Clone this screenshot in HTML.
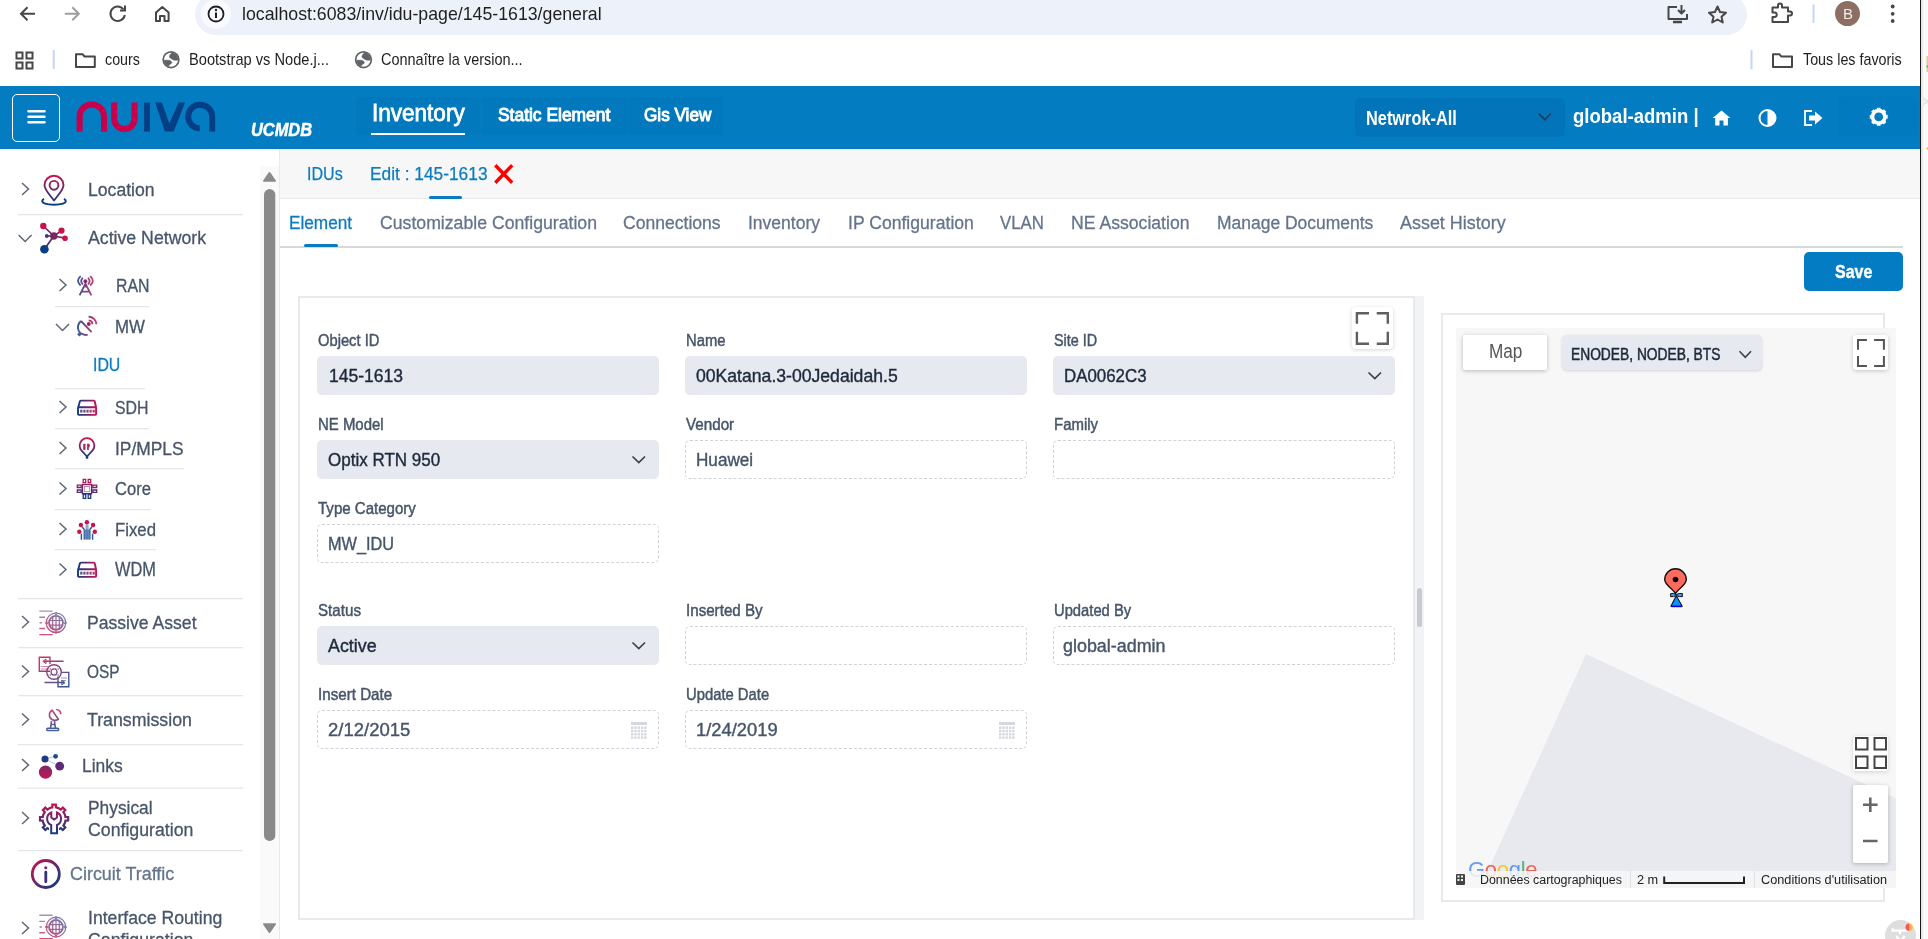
<!DOCTYPE html>
<html><head><meta charset="utf-8"><style>
html,body{margin:0;padding:0;}
body{width:1928px;height:939px;overflow:hidden;position:relative;background:#fff;font-family:"Liberation Sans",sans-serif;}
.t{position:absolute;white-space:nowrap;transform-origin:0 0;}
.r{position:absolute;}
svg{overflow:visible;}
</style></head><body>
<div class="r" style="left:195px;top:-6px;width:1552px;height:41px;background:#edf2fa;border-radius:21px;"></div>
<div class="r" style="left:201px;top:-1px;width:30px;height:30px;background:#f8faff;border-radius:50%;"></div>
<svg class="r" style="left:0;top:0" width="260" height="86" viewBox="0 0 260 86">
<g fill="none" stroke="#474747" stroke-width="2">
<path d="M35 13.7H21.5M27.5 7.2L21 13.7L27.5 20.2"/>
<path d="M64.8 13.7H78.3M72.3 7.2L78.8 13.7L72.3 20.2" stroke="#9e9e9e"/>
<path d="M123.5 9.5A7.2 7.2 0 1 0 124.8 15"/><path d="M125 5.5V10.5H120" />
<path d="M156 21V12.5L162.3 7L168.6 12.5V21H164.5V16H160V21Z" stroke-linejoin="round"/>
<rect x="16.5" y="52.5" width="6" height="6"/><rect x="26.5" y="52.5" width="6" height="6"/>
<rect x="16.5" y="62.5" width="6" height="6"/><rect x="26.5" y="62.5" width="6" height="6"/>
<path d="M76 54.2H82.5L84.5 56.5H94.8V67H76Z" stroke-linejoin="round"/>
</g>
<path d="M53.7 50V69" stroke="#c5d6f5" stroke-width="2"/>
<circle cx="216" cy="14" r="7.5" fill="none" stroke="#1f1f1f" stroke-width="1.8"/>
<rect x="215" y="12.5" width="2" height="5.5" fill="#1f1f1f"/><circle cx="216" cy="10" r="1.2" fill="#1f1f1f"/>
<g transform="translate(0.0,0)"><circle cx="171" cy="59.7" r="8.7" fill="#5f6368"/><circle cx="171" cy="59.7" r="7" fill="#fff"/><path d="M171.9 52.8A7 7 0 0 1 178 60.1L175.7 60.3L173.5 60L171 58.6L169.4 57.2L169.9 55Z" fill="#5f6368" stroke="#5f6368" stroke-width="0.6" stroke-linejoin="round"/><path d="M164.05 60.2L169.1 60.2L171 61.1L171.9 62.5L171 63.9L169.1 64.7L168.8 66.3A7 7 0 0 1 164.05 60.2Z" fill="#5f6368" stroke="#5f6368" stroke-width="0.6" stroke-linejoin="round"/></g>
</svg>
<svg class="r" style="left:355px;top:40px" width="20" height="40" viewBox="355 40 20 40"><g transform="translate(192.5,0)"><circle cx="171" cy="59.7" r="8.7" fill="#5f6368"/><circle cx="171" cy="59.7" r="7" fill="#fff"/><path d="M171.9 52.8A7 7 0 0 1 178 60.1L175.7 60.3L173.5 60L171 58.6L169.4 57.2L169.9 55Z" fill="#5f6368" stroke="#5f6368" stroke-width="0.6" stroke-linejoin="round"/><path d="M164.05 60.2L169.1 60.2L171 61.1L171.9 62.5L171 63.9L169.1 64.7L168.8 66.3A7 7 0 0 1 164.05 60.2Z" fill="#5f6368" stroke="#5f6368" stroke-width="0.6" stroke-linejoin="round"/></g></svg>
<svg class="r" style="left:1660px;top:0" width="268" height="86" viewBox="1660 0 268 86">
<g fill="none" stroke="#474747" stroke-width="2" stroke-linejoin="round">
<path d="M1677 7H1668.5V19H1687V14"/><path d="M1681.5 5V13.5M1678 10L1681.5 13.5L1685 10"/><path d="M1673 22H1682" stroke-width="2.5"/>
<path d="M1717.5 6.5L1720 12L1726 12.7L1721.5 16.7L1722.8 22.5L1717.5 19.5L1712.2 22.5L1713.5 16.7L1709 12.7L1715 12Z"/>
<path d="M1772.5 7.5H1778V5.5A2 2 0 0 1 1782 5.5V7.5H1788V11.5H1790A2 2 0 0 1 1790 15.5H1788V22H1772.5V17H1775A2.3 2.3 0 0 0 1775 12.5H1772.5Z"/>
<path d="M1773 54.3H1779.5L1781.5 56.6H1792V67H1773Z"/>
</g>
<path d="M1813.5 4.5V23" stroke="#c5d6f5" stroke-width="2"/>
<path d="M1751.5 50V69.5" stroke="#c5d6f5" stroke-width="2"/>
<circle cx="1847.5" cy="13.6" r="12.5" fill="#8d6e63"/>
<circle cx="1892.7" cy="6.5" r="1.9" fill="#474747"/><circle cx="1892.7" cy="13.8" r="1.9" fill="#474747"/><circle cx="1892.7" cy="21" r="1.9" fill="#474747"/>
</svg>
<div class="t" style="left:242.00px;top:5.00px;font-size:18.31px;line-height:18.31px;color:#1f1f1f;font-weight:normal;font-style:normal;transform:scaleX(0.9686);">localhost:6083/inv/idu-page/145-1613/general</div>
<div class="t" style="left:105.10px;top:52.00px;font-size:15.99px;line-height:15.99px;color:#1f1f1f;font-weight:normal;font-style:normal;transform:scaleX(0.8928);">cours</div>
<div class="t" style="left:189.00px;top:52.00px;font-size:15.99px;line-height:15.99px;color:#1f1f1f;font-weight:normal;font-style:normal;transform:scaleX(0.9159);">Bootstrap vs Node.j...</div>
<div class="t" style="left:381.30px;top:52.00px;font-size:15.99px;line-height:15.99px;color:#1f1f1f;font-weight:normal;font-style:normal;transform:scaleX(0.9057);">Connaître la version...</div>
<div class="t" style="left:1803.40px;top:52.00px;font-size:15.99px;line-height:15.99px;color:#1f1f1f;font-weight:normal;font-style:normal;transform:scaleX(0.8951);">Tous les favoris</div>
<div class="t" style="left:1842.50px;top:7.00px;font-size:14.53px;line-height:14.53px;color:#f3ebe8;font-weight:normal;font-style:normal;transform:scaleX(1.0346);">B</div>
<div class="r" style="left:1920px;top:0px;width:1px;height:939px;background:#1a1a1a;"></div>
<div class="r" style="left:1921px;top:0px;width:7px;height:939px;background:#efefef;"></div>
<div class="r" style="left:0px;top:86px;width:1920px;height:63px;background:#037cc2;"></div>
<div class="r" style="left:12px;top:94px;width:48px;height:48px;border:1px solid #fff;border-radius:5px;box-sizing:border-box;"></div>
<svg class="r" style="left:0;top:86px" width="60" height="60" viewBox="0 86 60 60"><g stroke="#fff" stroke-width="2.6" stroke-linecap="round"><path d="M28.5 111.3H44.5M28.5 116.8H44.5M28.5 122.3H44.5"/></g></svg>
<svg class="r" style="left:0;top:86px" width="230" height="63" viewBox="0 86 230 63">
<g fill="none" stroke-width="6">
<path d="M79.6 131.8V116.6A12.2 12.2 0 0 1 104 116.6V131.8" stroke="#c8004b"/>
<path d="M114.2 102.4V118.85A10.15 10.15 0 0 0 134.5 118.85V102.4" stroke="#c8004b"/>
<path d="M199.7 128.3A11.5 11.8 0 0 1 188.2 116.5A11.5 11.8 0 0 1 199.7 104.7C206.6 104.7 212.2 109.6 212.2 116.6V131.6" stroke="#043f86" stroke-width="5.9"/>
</g>
<rect x="144.1" y="102.6" width="5.9" height="29" fill="#043f86"/>
<path d="M155.2 102.4H161.8L169.3 123.5L178.6 102.4H185L173.7 131.6H164.9Z" fill="#043f86"/>
</svg>
<div class="t" style="left:250.70px;top:121.00px;font-size:18.60px;line-height:18.60px;color:#fff;font-weight:bold;font-style:italic;transform:scaleX(0.8814);-webkit-text-stroke:0.5px #fff;">UCMDB</div>
<div class="r" style="left:356px;top:97px;width:124px;height:38px;background:rgba(0,0,0,0.025);border-radius:4px;"></div>
<div class="r" style="left:482px;top:97px;width:145px;height:38px;background:rgba(0,0,0,0.025);border-radius:4px;"></div>
<div class="r" style="left:628px;top:97px;width:95px;height:38px;background:rgba(0,0,0,0.025);border-radius:4px;"></div>
<div class="t" style="left:372.00px;top:102.00px;font-size:23.69px;line-height:23.69px;color:#fff;font-weight:normal;font-style:normal;transform:scaleX(0.9508);-webkit-text-stroke:0.8px #fff;">Inventory</div>
<div class="r" style="left:371px;top:133px;width:94px;height:2px;background:#fff;"></div>
<div class="t" style="left:498.40px;top:106.00px;font-size:18.90px;line-height:18.90px;color:#fff;font-weight:normal;font-style:normal;transform:scaleX(0.9222);-webkit-text-stroke:1.0px #fff;">Static Element</div>
<div class="t" style="left:644.40px;top:106.00px;font-size:18.90px;line-height:18.90px;color:#fff;font-weight:normal;font-style:normal;transform:scaleX(0.9076);-webkit-text-stroke:1.0px #fff;">Gis View</div>
<div class="r" style="left:1355px;top:98px;width:210px;height:38.5px;background:#0275ba;border-radius:5px;"></div>
<div class="t" style="left:1366.00px;top:108.00px;font-size:20.35px;line-height:20.35px;color:#fff;font-weight:bold;font-style:normal;transform:scaleX(0.8033);">Netwrok-All</div>
<svg class="r" style="left:1530px;top:105px" width="30" height="25" viewBox="1530 105 30 25"><path d="M1538.8 113.6L1544.8 119.6L1550.8 113.6" fill="none" stroke="#183f63" stroke-width="1.8"/></svg>
<div class="t" style="left:1572.70px;top:106.00px;font-size:20.35px;line-height:20.35px;color:#fff;font-weight:bold;font-style:normal;transform:scaleX(0.9104);">global-admin |</div>
<div class="r" style="left:1838px;top:97px;width:81px;height:39px;background:rgba(0,0,0,0.012);border-radius:4px;"></div>
<svg class="r" style="left:1700px;top:100px" width="200" height="35" viewBox="1700 100 200 35">
<path d="M1721.5 110.4L1712.7 118H1715.2V125.6H1719.5V120.5H1723.5V125.6H1727.9V118H1730.4Z" fill="#fff"/>
<circle cx="1767.5" cy="118" r="8" fill="none" stroke="#fff" stroke-width="2"/><path d="M1767.5 110A8 8 0 0 1 1767.5 126Z" fill="#fff"/>
<path d="M1812 111H1805V125H1812" fill="none" stroke="#fff" stroke-width="1.8"/><path d="M1809 115.5H1815V111.5L1822.5 118L1815 124.5V120.5H1809Z" fill="#fff"/>
<g transform="translate(1878.7,116.8)"><circle r="6.2" fill="none" stroke="#fff" stroke-width="3.6"/>
<g fill="#fff"><rect x="-1.8" y="-9" width="3.6" height="4"/><rect x="-1.8" y="5" width="3.6" height="4"/><rect x="-9" y="-1.8" width="4" height="3.6"/><rect x="5" y="-1.8" width="4" height="3.6"/>
<g transform="rotate(45)"><rect x="-1.8" y="-9" width="3.6" height="4"/><rect x="-1.8" y="5" width="3.6" height="4"/><rect x="-9" y="-1.8" width="4" height="3.6"/><rect x="5" y="-1.8" width="4" height="3.6"/></g></g></g>
</svg>
<div class="r" style="left:0px;top:149px;width:279px;height:790px;background:#fff;"></div>
<div class="r" style="left:279px;top:149px;width:1px;height:790px;background:#e6e9ee;"></div>
<div class="r" style="left:260px;top:166px;width:19px;height:773px;background:#fafafa;"></div>
<svg class="r" style="left:255px;top:160px" width="25" height="779" viewBox="255 160 25 779">
<path d="M263.8 181L269.5 172.8L275.2 181Z" fill="#8a8a8a" stroke="#8a8a8a" stroke-width="1.6" stroke-linejoin="round"/>
<rect x="264" y="189" width="11.3" height="652" rx="5.6" fill="#8a8a8a"/>
<path d="M263.8 924L269.5 932.2L275.2 924Z" fill="#8a8a8a" stroke="#8a8a8a" stroke-width="1.6" stroke-linejoin="round"/>
</svg>
<svg class="r" style="left:0;top:0" width="260" height="939" viewBox="0 0 260 939"><path d="M22 183L28.5 189L22 195" fill="none" stroke="#5d6878" stroke-width="1.5"/><path d="M18.6 235.0L25.1 241.5L31.6 235.0" fill="none" stroke="#5d6878" stroke-width="1.5"/><path d="M59.5 279L66.0 285L59.5 291" fill="none" stroke="#5d6878" stroke-width="1.5"/><path d="M59.5 401L66.0 407L59.5 413" fill="none" stroke="#5d6878" stroke-width="1.5"/><path d="M59.5 442L66.0 448L59.5 454" fill="none" stroke="#5d6878" stroke-width="1.5"/><path d="M59.5 482.5L66.0 488.5L59.5 494.5" fill="none" stroke="#5d6878" stroke-width="1.5"/><path d="M59.5 523L66.0 529L59.5 535" fill="none" stroke="#5d6878" stroke-width="1.5"/><path d="M59.5 563.5L66.0 569.5L59.5 575.5" fill="none" stroke="#5d6878" stroke-width="1.5"/><path d="M56 324.0L62.5 330.5L69 324.0" fill="none" stroke="#5d6878" stroke-width="1.5"/><path d="M22 616L28.5 622L22 628" fill="none" stroke="#5d6878" stroke-width="1.5"/><path d="M22 665.5L28.5 671.5L22 677.5" fill="none" stroke="#5d6878" stroke-width="1.5"/><path d="M22 713.5L28.5 719.5L22 725.5" fill="none" stroke="#5d6878" stroke-width="1.5"/><path d="M22 759L28.5 765L22 771" fill="none" stroke="#5d6878" stroke-width="1.5"/><path d="M22 812L28.5 818L22 824" fill="none" stroke="#5d6878" stroke-width="1.5"/><path d="M22 922L28.5 928L22 934" fill="none" stroke="#5d6878" stroke-width="1.5"/><rect x="18" y="214" width="225" height="1.3" fill="#e3e7ec"/><rect x="55" y="306" width="94" height="1.3" fill="#e3e7ec"/><rect x="55" y="388" width="90" height="1.3" fill="#e3e7ec"/><rect x="55" y="428" width="94" height="1.3" fill="#e3e7ec"/><rect x="55" y="468" width="129" height="1.3" fill="#e3e7ec"/><rect x="55" y="509" width="96" height="1.3" fill="#e3e7ec"/><rect x="55" y="549" width="101" height="1.3" fill="#e3e7ec"/><rect x="18" y="598" width="225" height="1.3" fill="#e3e7ec"/><rect x="18" y="647" width="225" height="1.3" fill="#e3e7ec"/><rect x="18" y="695" width="225" height="1.3" fill="#e3e7ec"/><rect x="18" y="744" width="225" height="1.3" fill="#e3e7ec"/><rect x="18" y="787.5" width="225" height="1.3" fill="#e3e7ec"/><rect x="18" y="850" width="225" height="1.3" fill="#e3e7ec"/></svg>
<svg class="r" style="left:0;top:0" width="260" height="939" viewBox="0 0 260 939"><defs><linearGradient id="g1" gradientUnits="userSpaceOnUse" x1="0" y1="175" x2="0" y2="205"><stop offset="0" stop-color="#c8124e"/><stop offset="1" stop-color="#0a3d84"/></linearGradient><linearGradient id="g2" gradientUnits="userSpaceOnUse" x1="66" y1="222" x2="42" y2="252"><stop offset="0" stop-color="#c8124e"/><stop offset="1" stop-color="#0a3d84"/></linearGradient><linearGradient id="g3" gradientUnits="userSpaceOnUse" x1="77" y1="0" x2="95" y2="0"><stop offset="0" stop-color="#0a3d84"/><stop offset="1" stop-color="#c8124e"/></linearGradient><linearGradient id="g4" gradientUnits="userSpaceOnUse" x1="77" y1="0" x2="97" y2="0"><stop offset="0" stop-color="#0a3d84"/><stop offset="1" stop-color="#c8124e"/></linearGradient><linearGradient id="g5" gradientUnits="userSpaceOnUse" x1="77" y1="0" x2="97" y2="0"><stop offset="0" stop-color="#0a3d84"/><stop offset="1" stop-color="#c8124e"/></linearGradient><linearGradient id="g6" gradientUnits="userSpaceOnUse" x1="77" y1="0" x2="97" y2="0"><stop offset="0" stop-color="#0a3d84"/><stop offset="1" stop-color="#c8124e"/></linearGradient><linearGradient id="g7" gradientUnits="userSpaceOnUse" x1="0" y1="439" x2="0" y2="459"><stop offset="0" stop-color="#c8124e"/><stop offset="1" stop-color="#0a3d84"/></linearGradient><linearGradient id="g8" gradientUnits="userSpaceOnUse" x1="0" y1="479" x2="0" y2="499"><stop offset="0" stop-color="#c8124e"/><stop offset="1" stop-color="#0a3d84"/></linearGradient><linearGradient id="g9" gradientUnits="userSpaceOnUse" x1="66" y1="610.8" x2="44" y2="634.8"><stop offset="0" stop-color="#3d6aa8"/><stop offset="1" stop-color="#c8124e"/></linearGradient><linearGradient id="g10" gradientUnits="userSpaceOnUse" x1="0" y1="610.8" x2="0" y2="634.8"><stop offset="0" stop-color="#8a6aa8"/><stop offset="1" stop-color="#c8124e"/></linearGradient><linearGradient id="g11" gradientUnits="userSpaceOnUse" x1="66" y1="915" x2="44" y2="939"><stop offset="0" stop-color="#3d6aa8"/><stop offset="1" stop-color="#c8124e"/></linearGradient><linearGradient id="g12" gradientUnits="userSpaceOnUse" x1="0" y1="915" x2="0" y2="939"><stop offset="0" stop-color="#8a6aa8"/><stop offset="1" stop-color="#c8124e"/></linearGradient><linearGradient id="g13" gradientUnits="userSpaceOnUse" x1="40" y1="657" x2="68" y2="687"><stop offset="0" stop-color="#c8124e"/><stop offset="1" stop-color="#0a3d84"/></linearGradient><linearGradient id="g14" gradientUnits="userSpaceOnUse" x1="0" y1="708" x2="0" y2="731"><stop offset="0" stop-color="#c8124e"/><stop offset="1" stop-color="#0a3d84"/></linearGradient><linearGradient id="g15" gradientUnits="userSpaceOnUse" x1="0" y1="765" x2="0" y2="779"><stop offset="0" stop-color="#7a2a6a"/><stop offset="1" stop-color="#c8124e"/></linearGradient><linearGradient id="g16" gradientUnits="userSpaceOnUse" x1="0" y1="804" x2="0" y2="834"><stop offset="0" stop-color="#c8124e"/><stop offset="1" stop-color="#0a3d84"/></linearGradient><linearGradient id="g17" gradientUnits="userSpaceOnUse" x1="33" y1="861" x2="59" y2="887"><stop offset="0" stop-color="#c8124e"/><stop offset="1" stop-color="#0a3d84"/></linearGradient></defs><g fill="none" stroke="url(#g1)" stroke-width="1.9"><path d="M54 200.5C49 194 44.5 189.5 44.5 185.2A9.5 9.5 0 0 1 63.5 185.2C63.5 189.5 59 194 54 200.5Z" stroke-linejoin="round"/><circle cx="54" cy="185.3" r="4.4"/><path d="M44 198.8C41.3 200.3 41.6 202.6 45 203.6C49.5 205 58.5 205 63 203.6C66.4 202.6 66.7 200.3 64 198.8" stroke="#0a3d84" stroke-width="2"/></g><g stroke="url(#g2)" stroke-width="1.7" fill="none"><path d="M43.3 226L53.8 236L61.5 230.7M53.8 236L65 238.2M46.8 236H53.8M53.8 236L44.4 249.2"/></g><circle cx="43.3" cy="226" r="3.2" fill="#c8124e"/><circle cx="61.5" cy="230.6" r="3.1" fill="#c8124e"/><circle cx="65" cy="238.3" r="2.8" fill="#c8124e"/><circle cx="53.8" cy="236" r="3.7" fill="#7a2560"/><circle cx="46.8" cy="236" r="1.9" fill="#3b3a7a"/><circle cx="44.4" cy="249.2" r="4.3" fill="#0a3d84"/><g fill="none" stroke="url(#g3)" stroke-width="1.8" stroke-linecap="round" opacity="0.85"><path d="M80.2 276.6Q75.8 280.8 80.2 285M82.4 278.3Q80 281 82.4 283.8M88.4 278.3Q90.8 281 88.4 283.8M90.6 276.6Q95 280.8 90.6 285"/><path d="M79.6 295.3L85.4 283.5L91.4 295.3M84 286.6H86.8M81.6 291.6H89.3" stroke-linecap="butt"/></g><circle cx="85.4" cy="281.2" r="1.9" fill="#7a2a66"/><g fill="none" stroke="url(#g4)" stroke-width="1.9" opacity="0.85"><path d="M81 321L91.6 332.2M81 321C76.5 325 77 332 82.5 334.2C84.3 335 86.5 335 87.7 334.6"/><path d="M88.6 320.4A4 4 0 0 1 92.4 324.3M88.6 316.7A7.7 7.7 0 0 1 96.3 324.3"/><path d="M78 333.5L80.5 335.5" stroke-width="2.8"/></g><circle cx="88.8" cy="324" r="1.9" fill="#b01a55"/><g fill="none" stroke="url(#g5)" stroke-width="1.9" stroke-linejoin="round"><path d="M78.3 407.3L79.9 401.3Q80.3 400.6 81.3 400.6H93.5Q94.3 400.6 94.7 401.3L96 407.3" transform="translate(0 0.0)"/><rect x="78" y="407.3" width="18.1" height="7.6" rx="0.8"/></g><g fill="url(#g5)" opacity="0.85"><rect x="80.2" y="409.7" width="2.2" height="2.9"/><rect x="83.3" y="409.7" width="2.2" height="2.9"/><rect x="86.4" y="409.7" width="2.2" height="2.9"/><rect x="89.5" y="409.7" width="2.2" height="2.9"/><rect x="92.6" y="409.7" width="2.2" height="2.9"/></g><g fill="none" stroke="url(#g6)" stroke-width="1.9" stroke-linejoin="round"><path d="M78.3 407.3L79.9 401.3Q80.3 400.6 81.3 400.6H93.5Q94.3 400.6 94.7 401.3L96 407.3" transform="translate(0 162.0)"/><rect x="78" y="569.3" width="18.1" height="7.6" rx="0.8"/></g><g fill="url(#g6)" opacity="0.85"><rect x="80.2" y="571.7" width="2.2" height="2.9"/><rect x="83.3" y="571.7" width="2.2" height="2.9"/><rect x="86.4" y="571.7" width="2.2" height="2.9"/><rect x="89.5" y="571.7" width="2.2" height="2.9"/><rect x="92.6" y="571.7" width="2.2" height="2.9"/></g><g fill="none" stroke="url(#g7)" stroke-width="1.8"><path d="M87 456.5L81.8 450.8A7.4 7.4 0 1 1 92.2 450.8Z" stroke-linejoin="round"/></g><path d="M87 456V458.7" stroke="#0a3d84" stroke-width="2.4"/><rect x="83.2" y="443.8" width="2.3" height="6.1" fill="#b0265e"/><path d="M87.1 443.8H89.3A3 3 0 0 1 89.3 447.4H88.8V449.9H87.1Z" fill="#b0265e"/><g fill="none" stroke="url(#g8)" stroke-width="1.4"><rect x="82.4" y="484.5" width="9.2" height="9.2"/><rect x="84.4" y="486.5" width="5.2" height="5.2" stroke-width="1" opacity="0.5"/><path d="M83.2 479.3H85.7V482.6H83.2ZM88.2 479.3H90.7V482.6H88.2ZM83.2 494.6H85.7V498.4H83.2ZM88.2 494.6H90.7V498.4H88.2ZM77.3 485.1H81.2V487.5H77.3ZM77.3 490H81.2V492.4H77.3ZM92.8 485.1H96.7V487.5H92.8ZM92.8 490H96.7V492.4H92.8Z" stroke-width="1.3"/></g><circle cx="87" cy="489.1" r="1.2" fill="#fff"/><g fill="none" stroke="#2f5c9c" stroke-width="1.5" stroke-linecap="round"><path d="M81.4 539.3V534.3M92.6 539.3V534.3M82.4 527.3L84.4 529.8"/><path d="M91.6 527.3L89.6 529.8"/></g><rect x="83.3" y="529.5" width="7.5" height="10" fill="#7b9ac4"/><path d="M84.5 539.5V530M86.2 539.5V524.5M87.9 539.5V524.5M89.6 539.5V530" stroke="#3d69a6" stroke-width="0.9"/><g fill="#c8124e"><circle cx="86.9" cy="522.3" r="2.2"/><circle cx="80.9" cy="525" r="2.2"/><circle cx="93.1" cy="525" r="2.2"/><circle cx="79.3" cy="531.7" r="2.2"/><circle cx="94.8" cy="531.7" r="2.2"/></g><g fill="none" stroke="url(#g9)" stroke-width="1.2" opacity="0.8"><circle cx="56" cy="622.8" r="9.8"/><circle cx="56" cy="622.8" r="7" stroke-width="1.8"/><path d="M56 615.8V629.8M49 620.5H63M49 625.0999999999999H63M52.7 616.8V628.8M59.3 616.8V628.8" stroke-width="1.2"/><path d="M56 612.3L57.6 613.5L56 614.8L54.4 613.5Z M56 630.8L57.6 632.0999999999999L56 633.3L54.4 632.0999999999999Z M45.5 622.8L46.7 621.1999999999999L48 622.8L46.7 624.4Z M64 622.8L65.3 621.1999999999999L66.5 622.8L65.3 624.4Z" stroke-width="1"/></g><g fill="none" stroke="url(#g10)" stroke-width="1.4" opacity="0.75"><path d="M39.3 611.0999999999999H52.7M39.3 617.1999999999999H45M39.6 622.8H41.8M39.3 628.5H45M39.3 634.5999999999999H52.7"/></g><g fill="none" stroke="url(#g11)" stroke-width="1.2" opacity="0.8"><circle cx="56" cy="927" r="9.8"/><circle cx="56" cy="927" r="7" stroke-width="1.8"/><path d="M56 920V934M49 924.7H63M49 929.3H63M52.7 921V933M59.3 921V933" stroke-width="1.2"/><path d="M56 916.5L57.6 917.7L56 919L54.4 917.7Z M56 935L57.6 936.3L56 937.5L54.4 936.3Z M45.5 927L46.7 925.4L48 927L46.7 928.6Z M64 927L65.3 925.4L66.5 927L65.3 928.6Z" stroke-width="1"/></g><g fill="none" stroke="url(#g12)" stroke-width="1.4" opacity="0.75"><path d="M39.3 915.3H52.7M39.3 921.4H45M39.6 927H41.8M39.3 932.7H45M39.3 938.8H52.7"/></g><g fill="none" stroke="url(#g13)" stroke-width="1.4" opacity="0.85"><path d="M50 671.3H39.3V657.3H50V664"/><path d="M58 676.5V686.8H68.8V672.4H61.5"/><circle cx="54" cy="672" r="7.3"/><circle cx="54" cy="672" r="3" stroke-width="1.2"/><path d="M47 669H61M47 675H61" stroke-width="1.1" stroke-dasharray="1.6 1"/><path d="M43.5 661.3H63.5M44.5 682.6H64.5" stroke-width="1.5"/><path d="M42.8 661.3L46 659V663.6Z M65 682.6L61.8 680.3V684.9Z" stroke-width="1"/><path d="M40.8 666.5H48M40.8 669H47" stroke-width="1" opacity="0.6"/><path d="M61 678H67M61 680.5H66" stroke-width="1" opacity="0.6"/></g><g fill="none" stroke="url(#g14)" stroke-width="1.6" stroke-linejoin="round" opacity="0.8"><path d="M52.1 710.2C48.5 712.5 48.6 717.5 52 719.5C54 720.6 56.5 720.3 58.4 719.2Z"/><path d="M56.2 709.5A4.6 4.6 0 0 1 60.8 714.3" /><path d="M50.6 728.2L51.5 721M55.4 728.2L54.5 721M51.2 724.5H54.8"/><rect x="46.8" y="728.3" width="11.8" height="2.3" rx="0.8" stroke-width="1.5"/></g><path d="M45 759L55.6 756.3M45 759L59.7 766.2" stroke="#b7bdd6" stroke-width="1"/><circle cx="45" cy="759" r="3.5" fill="#1f3a86"/><circle cx="55.6" cy="756.3" r="2.4" fill="#1d4a8c"/><circle cx="59.7" cy="766.2" r="4.4" fill="#5d2a78"/><circle cx="45.5" cy="772.2" r="6.6" fill="url(#g15)"/><mask id="pcm"><rect x="30" y="795" width="50" height="45" fill="#fff"/><rect x="49" y="822" width="10" height="14" fill="#000"/></mask><g fill="none" stroke="url(#g16)" stroke-width="2.2" stroke-linejoin="miter"><path d="M50.45 807.89 L52.30 807.44 L52.37 804.71 L55.83 804.71 L55.90 807.44 L57.75 807.89 L59.23 808.51 L60.86 809.50 L62.84 807.61 L65.29 810.06 L63.40 812.04 L64.39 813.67 L65.01 815.15 L65.46 817.00 L68.19 817.07 L68.19 820.53 L65.46 820.60 L65.01 822.45 L64.39 823.93 L63.40 825.56 L65.29 827.54 L62.84 829.99 L60.86 828.10 L59.23 829.09 L57.75 829.71 L55.90 830.16 L55.83 832.89 L52.37 832.89 L52.30 830.16 L50.45 829.71 L48.97 829.09 L47.34 828.10 L45.36 829.99 L42.91 827.54 L44.80 825.56 L43.81 823.93 L43.19 822.45 L42.74 820.60 L40.01 820.53 L40.01 817.07 L42.74 817.00 L43.19 815.15 L43.81 813.67 L44.80 812.04 L42.91 810.06 L45.36 807.61 L47.34 809.50 L48.97 808.51Z" mask="url(#pcm)"/><path d="M51.3 812.5A6.8 6.8 0 0 0 51.2 825V833.2H57V825A6.8 6.8 0 0 0 56.9 812.5V817.5L54.1 819.5L51.3 817.5Z" stroke-width="2"/></g><circle cx="45.8" cy="874" r="13.5" fill="none" stroke="url(#g17)" stroke-width="2.8"/><path d="M45.8 872.2V881.8" stroke="#3b2f7c" stroke-width="2.8" stroke-linecap="round"/><circle cx="45.8" cy="867.8" r="1.5" fill="#6a2a6c"/></svg>
<div class="t" style="left:87.70px;top:182.00px;font-size:17.88px;line-height:17.88px;color:#475569;font-weight:normal;font-style:normal;transform:scaleX(0.9855);-webkit-text-stroke:0.3px #475569;">Location</div>
<div class="t" style="left:87.70px;top:229.00px;font-size:18.46px;line-height:18.46px;color:#475569;font-weight:normal;font-style:normal;transform:scaleX(0.9601);-webkit-text-stroke:0.3px #475569;">Active Network</div>
<div class="t" style="left:115.50px;top:277.00px;font-size:18.46px;line-height:18.46px;color:#475569;font-weight:normal;font-style:normal;transform:scaleX(0.8601);-webkit-text-stroke:0.3px #475569;">RAN</div>
<div class="t" style="left:115.00px;top:318.00px;font-size:18.60px;line-height:18.60px;color:#475569;font-weight:normal;font-style:normal;transform:scaleX(0.9059);-webkit-text-stroke:0.3px #475569;">MW</div>
<div class="t" style="left:93.00px;top:356.00px;font-size:18.46px;line-height:18.46px;color:#0b7bc1;font-weight:normal;font-style:normal;transform:scaleX(0.8598);-webkit-text-stroke:0.3px #0b7bc1;">IDU</div>
<div class="t" style="left:115.00px;top:400.00px;font-size:17.88px;line-height:17.88px;color:#475569;font-weight:normal;font-style:normal;transform:scaleX(0.8881);-webkit-text-stroke:0.3px #475569;">SDH</div>
<div class="t" style="left:115.00px;top:441.00px;font-size:17.88px;line-height:17.88px;color:#475569;font-weight:normal;font-style:normal;transform:scaleX(0.9727);-webkit-text-stroke:0.3px #475569;">IP/MPLS</div>
<div class="t" style="left:115.00px;top:480.00px;font-size:18.02px;line-height:18.02px;color:#475569;font-weight:normal;font-style:normal;transform:scaleX(0.9205);-webkit-text-stroke:0.3px #475569;">Core</div>
<div class="t" style="left:115.00px;top:520.00px;font-size:19.19px;line-height:19.19px;color:#475569;font-weight:normal;font-style:normal;transform:scaleX(0.8740);-webkit-text-stroke:0.3px #475569;">Fixed</div>
<div class="t" style="left:115.00px;top:560.00px;font-size:19.33px;line-height:19.33px;color:#475569;font-weight:normal;font-style:normal;transform:scaleX(0.8484);-webkit-text-stroke:0.3px #475569;">WDM</div>
<div class="t" style="left:87.40px;top:614.00px;font-size:18.60px;line-height:18.60px;color:#475569;font-weight:normal;font-style:normal;transform:scaleX(0.9463);-webkit-text-stroke:0.3px #475569;">Passive Asset</div>
<div class="t" style="left:87.40px;top:663.00px;font-size:18.46px;line-height:18.46px;color:#475569;font-weight:normal;font-style:normal;transform:scaleX(0.8370);-webkit-text-stroke:0.3px #475569;">OSP</div>
<div class="t" style="left:87.40px;top:711.00px;font-size:18.46px;line-height:18.46px;color:#475569;font-weight:normal;font-style:normal;transform:scaleX(0.9634);-webkit-text-stroke:0.3px #475569;">Transmission</div>
<div class="t" style="left:82.30px;top:757.00px;font-size:18.60px;line-height:18.60px;color:#475569;font-weight:normal;font-style:normal;transform:scaleX(0.9369);-webkit-text-stroke:0.3px #475569;">Links</div>
<div class="t" style="left:87.60px;top:798.00px;font-size:19.19px;line-height:19.19px;color:#475569;font-weight:normal;font-style:normal;transform:scaleX(0.9039);-webkit-text-stroke:0.3px #475569;">Physical</div>
<div class="t" style="left:87.60px;top:820.00px;font-size:19.19px;line-height:19.19px;color:#475569;font-weight:normal;font-style:normal;transform:scaleX(0.9233);-webkit-text-stroke:0.3px #475569;">Configuration</div>
<div class="t" style="left:70.00px;top:865.00px;font-size:18.60px;line-height:18.60px;color:#64748b;font-weight:normal;font-style:normal;transform:scaleX(0.9641);-webkit-text-stroke:0.3px #64748b;">Circuit Traffic</div>
<div class="t" style="left:87.60px;top:909.00px;font-size:18.46px;line-height:18.46px;color:#475569;font-weight:normal;font-style:normal;transform:scaleX(0.9561);-webkit-text-stroke:0.3px #475569;">Interface Routing</div>
<div class="t" style="left:87.60px;top:930.00px;font-size:19.19px;line-height:19.19px;color:#475569;font-weight:normal;font-style:normal;transform:scaleX(0.9233);-webkit-text-stroke:0.3px #475569;">Configuration</div>
<div class="r" style="left:280px;top:149px;width:1640px;height:49px;background:#f7f7f7;"></div>
<div class="r" style="left:280px;top:198px;width:1640px;height:741px;background:#fff;"></div>
<div class="r" style="left:280px;top:197.5px;width:1640px;height:1.5px;background:#e6e8eb;"></div>
<div class="t" style="left:307.20px;top:165.00px;font-size:18.46px;line-height:18.46px;color:#0b7bc1;font-weight:normal;font-style:normal;transform:scaleX(0.8712);-webkit-text-stroke:0.25px #0b7bc1;">IDUs</div>
<div class="t" style="left:370.30px;top:165.00px;font-size:18.46px;line-height:18.46px;color:#0b7bc1;font-weight:normal;font-style:normal;transform:scaleX(0.9397);-webkit-text-stroke:0.25px #0b7bc1;">Edit : 145-1613</div>
<svg class="r" style="left:490px;top:160px" width="30" height="30" viewBox="490 160 30 30"><path d="M496.5 166.5L511 181.5M511 166.5L496.5 181.5" stroke="#f00" stroke-width="3.4" stroke-linecap="square"/></svg>
<div class="r" style="left:429px;top:196px;width:33px;height:3px;background:#0b7bc1;border-radius:2px;"></div>
<div class="t" style="left:289.30px;top:213.00px;font-size:19.19px;line-height:19.19px;color:#0b7bc1;font-weight:normal;font-style:normal;transform:scaleX(0.8961);-webkit-text-stroke:0.3px #0b7bc1;">Element</div>
<div class="t" style="left:379.50px;top:213.00px;font-size:19.19px;line-height:19.19px;color:#64748b;font-weight:normal;font-style:normal;transform:scaleX(0.9207);-webkit-text-stroke:0.3px #64748b;">Customizable Configuration</div>
<div class="t" style="left:623.40px;top:213.00px;font-size:19.19px;line-height:19.19px;color:#64748b;font-weight:normal;font-style:normal;transform:scaleX(0.9149);-webkit-text-stroke:0.3px #64748b;">Connections</div>
<div class="t" style="left:748.30px;top:213.00px;font-size:19.19px;line-height:19.19px;color:#64748b;font-weight:normal;font-style:normal;transform:scaleX(0.9120);-webkit-text-stroke:0.3px #64748b;">Inventory</div>
<div class="t" style="left:847.50px;top:213.00px;font-size:19.19px;line-height:19.19px;color:#64748b;font-weight:normal;font-style:normal;transform:scaleX(0.9171);-webkit-text-stroke:0.3px #64748b;">IP Configuration</div>
<div class="t" style="left:1000.20px;top:213.00px;font-size:19.19px;line-height:19.19px;color:#64748b;font-weight:normal;font-style:normal;transform:scaleX(0.8747);-webkit-text-stroke:0.3px #64748b;">VLAN</div>
<div class="t" style="left:1071.00px;top:213.00px;font-size:19.19px;line-height:19.19px;color:#64748b;font-weight:normal;font-style:normal;transform:scaleX(0.9184);-webkit-text-stroke:0.3px #64748b;">NE Association</div>
<div class="t" style="left:1216.70px;top:213.00px;font-size:19.19px;line-height:19.19px;color:#64748b;font-weight:normal;font-style:normal;transform:scaleX(0.9102);-webkit-text-stroke:0.3px #64748b;">Manage Documents</div>
<div class="t" style="left:1399.60px;top:213.00px;font-size:19.19px;line-height:19.19px;color:#64748b;font-weight:normal;font-style:normal;transform:scaleX(0.9345);-webkit-text-stroke:0.3px #64748b;">Asset History</div>
<div class="r" style="left:280px;top:246.3px;width:1623px;height:1.6999999999999886px;background:#d7dadd;"></div>
<div class="r" style="left:304px;top:244px;width:34px;height:3px;background:#0b7bc1;border-radius:2px;"></div>
<div class="r" style="left:1804px;top:252px;width:99px;height:39px;background:#037cc3;border-radius:5px;"></div>
<div class="t" style="left:1834.80px;top:263.00px;font-size:18.60px;line-height:18.60px;color:#fff;font-weight:bold;font-style:normal;transform:scaleX(0.8586);-webkit-text-stroke:0.4px #fff;">Save</div>
<div class="r" style="left:298px;top:296px;width:1117px;height:624px;border:2px solid #e6e9ee;border-right:2px solid #e6e9ee;box-sizing:border-box;background:#fff;"></div>
<div class="r" style="left:1415px;top:296px;width:9px;height:624px;background:#f1f3f5;"></div>
<div class="r" style="left:1416.5px;top:588px;width:5.0px;height:39px;background:#c7cbd1;border-radius:3px;"></div>
<div class="r" style="left:1352px;top:306.5px;width:41.299999999999955px;height:42.5px;background:#fff;box-shadow:0 1px 4px rgba(0,0,0,0.16);border-radius:4px;"></div>
<svg class="r" style="left:1350px;top:305px" width="45" height="45" viewBox="1350 305 45 45"><path d="M1356.9 323.8V313.2H1369M1376.75 313.2H1387.8V323.8M1356.9 331.8V343.8H1369M1376.75 343.8H1387.8V331.8" fill="none" stroke="#5f5f5f" stroke-width="2.4"/></svg>
<div class="t" style="left:318.30px;top:333.00px;font-size:15.84px;line-height:15.84px;color:#475569;font-weight:normal;font-style:normal;transform:scaleX(0.9309);-webkit-text-stroke:0.45px #475569;">Object ID</div>
<div class="r" style="left:317px;top:356px;width:342px;height:39px;background:#e6e9ef;border-radius:5px;"></div>
<div class="t" style="left:328.60px;top:367.00px;font-size:18.75px;line-height:18.75px;color:#1e293b;font-weight:normal;font-style:normal;transform:scaleX(0.9354);-webkit-text-stroke:0.4px #1e293b;">145-1613</div>
<div class="t" style="left:686.30px;top:333.00px;font-size:15.84px;line-height:15.84px;color:#475569;font-weight:normal;font-style:normal;transform:scaleX(0.9338);-webkit-text-stroke:0.45px #475569;">Name</div>
<div class="r" style="left:685px;top:356px;width:342px;height:39px;background:#e6e9ef;border-radius:5px;"></div>
<div class="t" style="left:696.00px;top:367.00px;font-size:18.75px;line-height:18.75px;color:#1e293b;font-weight:normal;font-style:normal;transform:scaleX(0.9391);-webkit-text-stroke:0.4px #1e293b;">00Katana.3-00Jedaidah.5</div>
<div class="t" style="left:1054.30px;top:333.00px;font-size:15.84px;line-height:15.84px;color:#475569;font-weight:normal;font-style:normal;transform:scaleX(0.9068);-webkit-text-stroke:0.45px #475569;">Site ID</div>
<div class="r" style="left:1053px;top:356px;width:342px;height:39px;background:#e6e9ef;border-radius:5px;"></div>
<div class="t" style="left:1064.20px;top:367.00px;font-size:18.75px;line-height:18.75px;color:#1e293b;font-weight:normal;font-style:normal;transform:scaleX(0.8998);-webkit-text-stroke:0.4px #1e293b;">DA0062C3</div>
<svg class="r" style="left:1363px;top:366px" width="20" height="20" viewBox="0 0 20 20"><path d="M5.5 6.5L11.8 12.5L18 6.5" fill="none" stroke="#374151" stroke-width="1.7"/></svg>
<div class="t" style="left:318.30px;top:417.00px;font-size:15.84px;line-height:15.84px;color:#475569;font-weight:normal;font-style:normal;transform:scaleX(0.9432);-webkit-text-stroke:0.45px #475569;">NE Model</div>
<div class="r" style="left:317px;top:440px;width:342px;height:39px;background:#e6e9ef;border-radius:5px;"></div>
<div class="t" style="left:328.20px;top:451.00px;font-size:18.75px;line-height:18.75px;color:#1e293b;font-weight:normal;font-style:normal;transform:scaleX(0.9074);-webkit-text-stroke:0.4px #1e293b;">Optix RTN 950</div>
<svg class="r" style="left:627px;top:450px" width="20" height="20" viewBox="0 0 20 20"><path d="M5.5 6.5L11.8 12.5L18 6.5" fill="none" stroke="#374151" stroke-width="1.7"/></svg>
<div class="t" style="left:686.30px;top:417.00px;font-size:15.84px;line-height:15.84px;color:#475569;font-weight:normal;font-style:normal;transform:scaleX(0.9597);-webkit-text-stroke:0.45px #475569;">Vendor</div>
<div class="r" style="left:685px;top:440px;width:342px;height:39px;border:1px dashed #cfd3d9;border-radius:5px;box-sizing:border-box;"></div>
<div class="t" style="left:696.40px;top:451.00px;font-size:18.75px;line-height:18.75px;color:#475569;font-weight:normal;font-style:normal;transform:scaleX(0.9131);-webkit-text-stroke:0.4px #475569;">Huawei</div>
<div class="t" style="left:1054.30px;top:417.00px;font-size:15.84px;line-height:15.84px;color:#475569;font-weight:normal;font-style:normal;transform:scaleX(0.9452);-webkit-text-stroke:0.45px #475569;">Family</div>
<div class="r" style="left:1053px;top:440px;width:342px;height:39px;border:1px dashed #cfd3d9;border-radius:5px;box-sizing:border-box;"></div>
<div class="t" style="left:318.30px;top:501.00px;font-size:15.84px;line-height:15.84px;color:#475569;font-weight:normal;font-style:normal;transform:scaleX(0.9509);-webkit-text-stroke:0.45px #475569;">Type Category</div>
<div class="r" style="left:317px;top:524px;width:342px;height:39px;border:1px dashed #cfd3d9;border-radius:5px;box-sizing:border-box;"></div>
<div class="t" style="left:328.20px;top:535.00px;font-size:18.75px;line-height:18.75px;color:#475569;font-weight:normal;font-style:normal;transform:scaleX(0.8694);-webkit-text-stroke:0.4px #475569;">MW_IDU</div>
<div class="t" style="left:318.30px;top:603.00px;font-size:15.84px;line-height:15.84px;color:#475569;font-weight:normal;font-style:normal;transform:scaleX(0.9574);-webkit-text-stroke:0.45px #475569;">Status</div>
<div class="r" style="left:317px;top:626px;width:342px;height:39px;background:#e6e9ef;border-radius:5px;"></div>
<div class="t" style="left:328.20px;top:637.00px;font-size:18.75px;line-height:18.75px;color:#1e293b;font-weight:normal;font-style:normal;transform:scaleX(0.9531);-webkit-text-stroke:0.4px #1e293b;">Active</div>
<svg class="r" style="left:627px;top:636px" width="20" height="20" viewBox="0 0 20 20"><path d="M5.5 6.5L11.8 12.5L18 6.5" fill="none" stroke="#374151" stroke-width="1.7"/></svg>
<div class="t" style="left:686.30px;top:603.00px;font-size:15.84px;line-height:15.84px;color:#475569;font-weight:normal;font-style:normal;transform:scaleX(0.9568);-webkit-text-stroke:0.45px #475569;">Inserted By</div>
<div class="r" style="left:685px;top:626px;width:342px;height:39px;border:1px dashed #cfd3d9;border-radius:5px;box-sizing:border-box;"></div>
<div class="t" style="left:1054.30px;top:603.00px;font-size:15.84px;line-height:15.84px;color:#475569;font-weight:normal;font-style:normal;transform:scaleX(0.9326);-webkit-text-stroke:0.45px #475569;">Updated By</div>
<div class="r" style="left:1053px;top:626px;width:342px;height:39px;border:1px dashed #cfd3d9;border-radius:5px;box-sizing:border-box;"></div>
<div class="t" style="left:1063.40px;top:637.00px;font-size:18.75px;line-height:18.75px;color:#475569;font-weight:normal;font-style:normal;transform:scaleX(0.9549);-webkit-text-stroke:0.4px #475569;">global-admin</div>
<div class="t" style="left:318.30px;top:687.00px;font-size:15.84px;line-height:15.84px;color:#475569;font-weight:normal;font-style:normal;transform:scaleX(0.9578);-webkit-text-stroke:0.45px #475569;">Insert Date</div>
<div class="r" style="left:317px;top:710px;width:342px;height:39px;border:1px dashed #cfd3d9;border-radius:5px;box-sizing:border-box;"></div>
<div class="t" style="left:328.20px;top:721.00px;font-size:18.75px;line-height:18.75px;color:#475569;font-weight:normal;font-style:normal;transform:scaleX(0.9876);-webkit-text-stroke:0.4px #475569;">2/12/2015</div>
<svg class="r" style="left:630px;top:721px" width="18" height="19" viewBox="0 0 18 19"><g fill="#d5d8de"><rect x="1" y="1" width="16" height="3"/><rect x="1.0" y="5.5" width="2.4" height="2.4"/><rect x="1.0" y="8.8" width="2.4" height="2.4"/><rect x="1.0" y="12.1" width="2.4" height="2.4"/><rect x="1.0" y="15.4" width="2.4" height="2.4"/><rect x="4.3" y="5.5" width="2.4" height="2.4"/><rect x="4.3" y="8.8" width="2.4" height="2.4"/><rect x="4.3" y="12.1" width="2.4" height="2.4"/><rect x="4.3" y="15.4" width="2.4" height="2.4"/><rect x="7.6" y="5.5" width="2.4" height="2.4"/><rect x="7.6" y="8.8" width="2.4" height="2.4"/><rect x="7.6" y="12.1" width="2.4" height="2.4"/><rect x="7.6" y="15.4" width="2.4" height="2.4"/><rect x="10.9" y="5.5" width="2.4" height="2.4"/><rect x="10.9" y="8.8" width="2.4" height="2.4"/><rect x="10.9" y="12.1" width="2.4" height="2.4"/><rect x="10.9" y="15.4" width="2.4" height="2.4"/><rect x="14.2" y="5.5" width="2.4" height="2.4"/><rect x="14.2" y="8.8" width="2.4" height="2.4"/><rect x="14.2" y="12.1" width="2.4" height="2.4"/><rect x="14.2" y="15.4" width="2.4" height="2.4"/></g></svg>
<div class="t" style="left:686.30px;top:687.00px;font-size:15.84px;line-height:15.84px;color:#475569;font-weight:normal;font-style:normal;transform:scaleX(0.9353);-webkit-text-stroke:0.45px #475569;">Update Date</div>
<div class="r" style="left:685px;top:710px;width:342px;height:39px;border:1px dashed #cfd3d9;border-radius:5px;box-sizing:border-box;"></div>
<div class="t" style="left:696.40px;top:721.00px;font-size:18.75px;line-height:18.75px;color:#475569;font-weight:normal;font-style:normal;transform:scaleX(0.9780);-webkit-text-stroke:0.4px #475569;">1/24/2019</div>
<svg class="r" style="left:998px;top:721px" width="18" height="19" viewBox="0 0 18 19"><g fill="#d5d8de"><rect x="1" y="1" width="16" height="3"/><rect x="1.0" y="5.5" width="2.4" height="2.4"/><rect x="1.0" y="8.8" width="2.4" height="2.4"/><rect x="1.0" y="12.1" width="2.4" height="2.4"/><rect x="1.0" y="15.4" width="2.4" height="2.4"/><rect x="4.3" y="5.5" width="2.4" height="2.4"/><rect x="4.3" y="8.8" width="2.4" height="2.4"/><rect x="4.3" y="12.1" width="2.4" height="2.4"/><rect x="4.3" y="15.4" width="2.4" height="2.4"/><rect x="7.6" y="5.5" width="2.4" height="2.4"/><rect x="7.6" y="8.8" width="2.4" height="2.4"/><rect x="7.6" y="12.1" width="2.4" height="2.4"/><rect x="7.6" y="15.4" width="2.4" height="2.4"/><rect x="10.9" y="5.5" width="2.4" height="2.4"/><rect x="10.9" y="8.8" width="2.4" height="2.4"/><rect x="10.9" y="12.1" width="2.4" height="2.4"/><rect x="10.9" y="15.4" width="2.4" height="2.4"/><rect x="14.2" y="5.5" width="2.4" height="2.4"/><rect x="14.2" y="8.8" width="2.4" height="2.4"/><rect x="14.2" y="12.1" width="2.4" height="2.4"/><rect x="14.2" y="15.4" width="2.4" height="2.4"/></g></svg>
<div class="r" style="left:1441px;top:313px;width:444px;height:589px;border:2px solid #e6e9ee;box-sizing:border-box;"></div>
<div class="r" style="left:1456px;top:328px;width:440px;height:560px;background:#f7f7f7;"></div>
<svg class="r" style="left:1456px;top:328px" width="440" height="560" viewBox="1456 328 440 560"><path d="M1586 654L1896 798.5V888H1480Z" fill="#e8e9ee"/>

</svg>
<div class="r" style="left:1463px;top:335px;width:84px;height:35px;background:#fff;border-radius:2px;box-shadow:0 1px 4px rgba(0,0,0,0.25);"></div>
<div class="t" style="left:1488.50px;top:342.00px;font-size:19.33px;line-height:19.33px;color:#565656;font-weight:normal;font-style:normal;transform:scaleX(0.8883);">Map</div>
<div class="r" style="left:1562px;top:335px;width:200px;height:35px;background:#e6e9ef;border-radius:5px;box-shadow:0 1px 3px rgba(0,0,0,0.15);"></div>
<div class="t" style="left:1571.40px;top:347.00px;font-size:15.99px;line-height:15.99px;color:#1e293b;font-weight:normal;font-style:normal;transform:scaleX(0.8624);-webkit-text-stroke:0.5px #1e293b;">ENODEB, NODEB, BTS</div>
<svg class="r" style="left:1735px;top:345px" width="20" height="18" viewBox="1735 345 20 18"><path d="M1739.5 351.3L1745.3 357.3L1751 351.3" fill="none" stroke="#374151" stroke-width="1.6"/></svg>
<div class="r" style="left:1853px;top:335px;width:35px;height:35px;background:#fff;border-radius:3px;box-shadow:0 1px 4px rgba(0,0,0,0.2);"></div>
<svg class="r" style="left:1853px;top:335px" width="35" height="35" viewBox="1853 335 35 35"><path d="M1858 349.7V340H1866.9M1874.1 340H1883.9V349.7M1858 356.1V365.9H1866.9M1874.1 365.9H1883.9V356.1" fill="none" stroke="#555" stroke-width="2"/></svg>
<svg class="r" style="left:1660px;top:564px" width="32" height="46" viewBox="1660 564 32 46">
<path d="M1675.5 593.6C1673.5 589 1664.7 585.5 1664.7 579.6A10.8 10.8 0 1 1 1686.3 579.6C1686.3 585.5 1677.5 589 1675.5 593.6Z" fill="#fd6b5e" stroke="#111" stroke-width="1.4"/>
<circle cx="1675.5" cy="579.5" r="2.8" fill="#000"/>
<path d="M1676.3 595.8L1670.9 606.3H1682.2Z" fill="#0a8fff" stroke="#111" stroke-width="1.1" stroke-linejoin="round"/>
<path d="M1670.6 593.6Q1673.5 592.9 1676.3 594.6Q1679.1 592.9 1682.4 593.6V596.6Q1679.1 597.2 1676.3 595.6Q1673.5 597.2 1670.6 596.6Z" fill="#3aa0ff" stroke="#111" stroke-width="1"/>
<path d="M1671.3 606.5H1681.8" stroke="#0000e0" stroke-width="1.4"/>
</svg>
<div class="r" style="left:1853px;top:736px;width:35px;height:35px;background:#fff;border-radius:2px;box-shadow:0 1px 4px rgba(0,0,0,0.15);"></div>
<svg class="r" style="left:1853px;top:736px" width="35" height="35" viewBox="1853 736 35 35"><g fill="none" stroke="#444" stroke-width="2"><rect x="1856" y="738" width="11.5" height="11.5"/><rect x="1874.5" y="738" width="11.5" height="11.5"/><rect x="1856" y="756.5" width="11.5" height="11.5"/><rect x="1874.5" y="756.5" width="11.5" height="11.5"/></g></svg>
<div class="r" style="left:1853px;top:785px;width:35px;height:78px;background:#fff;border-radius:2px;box-shadow:0 1px 4px rgba(0,0,0,0.25);"></div>
<svg class="r" style="left:1853px;top:785px" width="35" height="78" viewBox="1853 785 35 78"><path d="M1863 804.8H1877.6M1870.3 797.5V812.1M1863 841H1877.6" stroke="#666" stroke-width="2.6"/></svg>
<svg class="r" style="left:1465px;top:855px" width="80" height="30" viewBox="1465 855 80 30"><text x="1468" y="876.5" font-family="Liberation Sans" font-size="22" stroke-width="0.6" opacity="0.8" letter-spacing="-0.3"><tspan fill="#4285f4">G</tspan><tspan fill="#ea4335">o</tspan><tspan fill="#fbbc05">o</tspan><tspan fill="#4285f4">g</tspan><tspan fill="#34a853">l</tspan><tspan fill="#ea4335">e</tspan></text></svg>
<div class="r" style="left:1456px;top:871px;width:440px;height:17px;background:rgba(247,247,247,0.85);"></div>
<div class="r" style="left:1630px;top:871px;width:1px;height:17px;background:#e3e3e3;"></div>
<div class="r" style="left:1754px;top:871px;width:1px;height:17px;background:#e3e3e3;"></div>
<svg class="r" style="left:1455px;top:873px" width="12" height="13" viewBox="0 0 12 13"><g fill="#444"><rect x="1" y="1" width="9" height="11" rx="1"/></g><g fill="#f5f5f5"><rect x="2.5" y="2.5" width="2" height="2"/><rect x="6" y="2.5" width="2" height="2"/><rect x="2.5" y="6" width="2" height="2"/><rect x="6" y="6" width="2" height="2"/></g></svg>
<div class="t" style="left:1479.70px;top:873.00px;font-size:13.52px;line-height:13.52px;color:#222;font-weight:normal;font-style:normal;transform:scaleX(0.9171);">Données cartographiques</div>
<div class="t" style="left:1637.00px;top:873.00px;font-size:13.52px;line-height:13.52px;color:#222;font-weight:normal;font-style:normal;transform:scaleX(0.9419);">2 m</div>
<svg class="r" style="left:1660px;top:873px" width="90" height="15" viewBox="1660 873 90 15"><path d="M1664.2 876.5V883H1744V876.5" fill="none" stroke="#222" stroke-width="2"/></svg>
<div class="t" style="left:1761.40px;top:873.00px;font-size:13.52px;line-height:13.52px;color:#222;font-weight:normal;font-style:normal;transform:scaleX(0.9404);">Conditions d'utilisation</div>
<svg class="r" style="left:1880px;top:915px" width="40" height="24" viewBox="1880 915 40 24"><circle cx="1900.5" cy="935.6" r="15.5" fill="#dedede"/>
<path d="M1892.6 928.3V930.6H1908.6" stroke="#fff" stroke-width="2.2" fill="none"/><path d="M1900.5 931L1899.8 934M1896.3 936L1900.5 942M1904.7 936L1900.5 942" stroke="#fff" stroke-width="2.2" fill="none"/>
<circle cx="1909.2" cy="927.2" r="3.6" fill="#ffb83b"/><path d="M1909.2 923.6A3.6 3.6 0 0 0 1909.2 930.8Z" fill="#ff5064"/></svg>
<svg class="r" style="left:1921px;top:0" width="7" height="939" viewBox="1921 0 7 939"><rect x="1922" y="-5" width="20" height="105.5" rx="6" fill="#f9f9f9" stroke="#dcdcdc" stroke-width="1"/><rect x="1922" y="102.5" width="20" height="900" rx="6" fill="#f9f9f9" stroke="#dcdcdc" stroke-width="1"/>
<rect x="1926.5" y="56" width="3" height="16" fill="#d9c9a8"/><circle cx="1927.5" cy="66.6" r="1" fill="#4caf50"/><circle cx="1927.5" cy="148.5" r="1" fill="#f4b400"/></svg>
</body></html>
